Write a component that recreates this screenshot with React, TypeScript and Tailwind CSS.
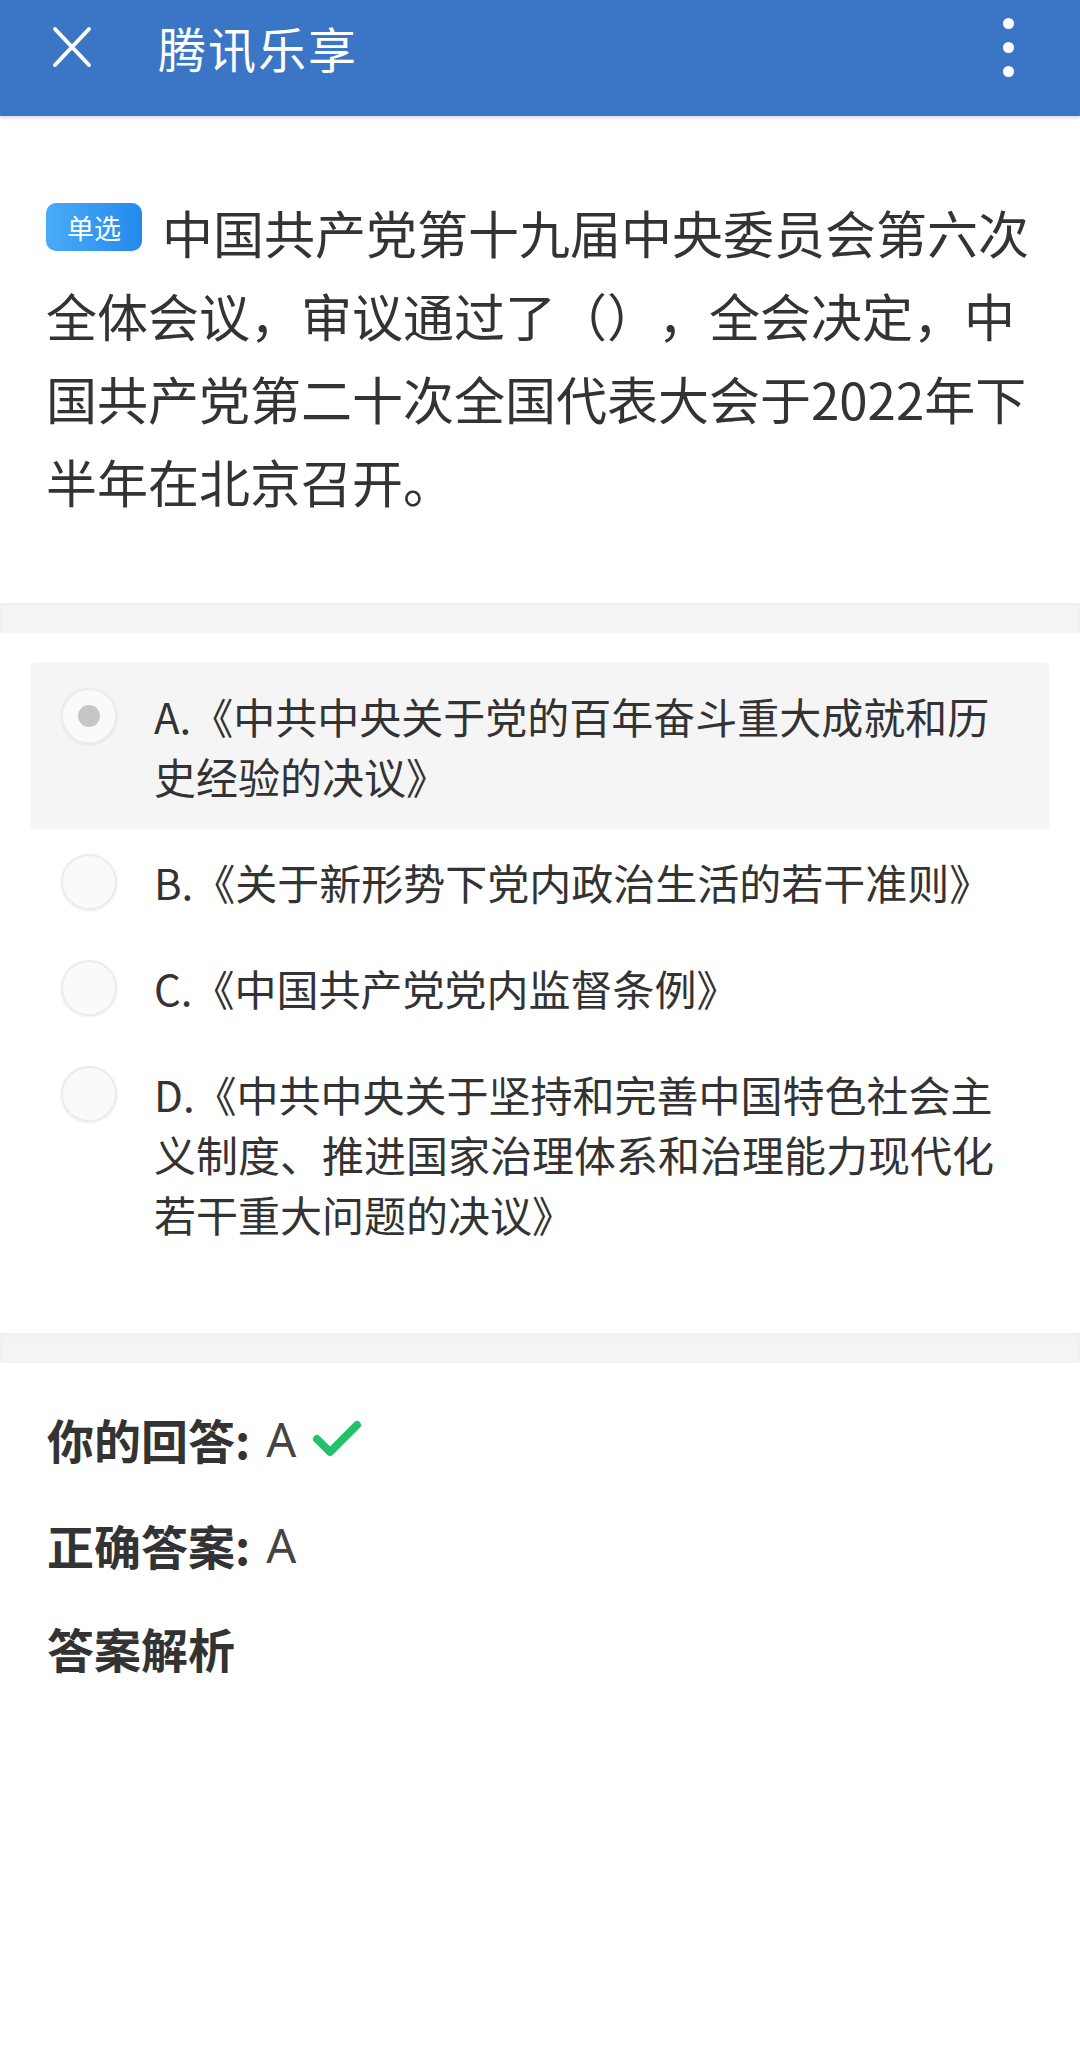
import React from 'react'

// 题目数据
const question = {
  type: '单选',
  text: '中国共产党第十九届中央委员会第六次全体会议，审议通过了（），全会决定，中国共产党第二十次全国代表大会于2022年下半年在北京召开。',
}

const options = [
  { key: 'A', text: '《中共中央关于党的百年奋斗重大成就和历史经验的决议》' },
  { key: 'B', text: '《关于新形势下党内政治生活的若干准则》' },
  { key: 'C', text: '《中国共产党党内监督条例》' },
  { key: 'D', text: '《中共中央关于坚持和完善中国特色社会主义制度、推进国家治理体系和治理能力现代化若干重大问题的决议》' },
]

const myAnswer = 'A'
const rightAnswer = 'A'

function Radio({ checked }: { checked: boolean }) {
  return (
    <div className="w-[56px] h-[56px] shrink-0 rounded-full border-2 border-[#ececec] bg-[#fafafa] shadow-[0_1px_3px_rgba(0,0,0,0.08)] flex items-center justify-center mt-[2px]">
      {checked && <div className="w-[22px] h-[22px] rounded-full bg-[#c6c6c6]" />}
    </div>
  )
}

function Divider() {
  return <div className="h-[30px] bg-[#f4f4f4] shadow-[inset_0_2px_4px_rgba(0,0,0,0.03)]" />
}

export default function App() {
  return (
    <div className="min-h-[2060px] bg-white font-['Noto_Sans_CJK_SC',sans-serif] text-[#333] [text-spacing-trim:space-all]">
      {/* 顶部栏 */}
      <header className="h-[116px] bg-[#3b76c6] flex items-center pb-[22px] shadow-[0_2px_3px_rgba(0,0,0,0.15)]">
        <div className="w-[158px] pl-[50px]">
          <svg width="44" height="44" viewBox="0 0 44 44" fill="none" stroke="white" strokeWidth="4" strokeLinecap="round">
            <path d="M5 4 L39 40 M39 4 L5 40" />
          </svg>
        </div>
        <h1 className="flex-1 text-white text-[48px] leading-none tracking-[2px]">腾讯乐享</h1>
        <div className="w-[144px] flex flex-col items-center gap-[13px]">
          <span className="w-[11px] h-[11px] rounded-full bg-white" />
          <span className="w-[11px] h-[11px] rounded-full bg-white" />
          <span className="w-[11px] h-[11px] rounded-full bg-white" />
        </div>
      </header>

      {/* 题干 */}
      <section className="px-[46px] pt-[75px] pb-[80px]">
        <p className="text-[51px] leading-[83px]">
          <span className="inline-flex align-top mt-[12px] mr-[20px] w-[96px] h-[48px] items-center justify-center rounded-[10px] bg-gradient-to-r from-[#4aabf9] to-[#2289ec] text-white text-[27px] leading-none">
            {question.type}
          </span>
          {question.text}
        </p>
      </section>

      <Divider />

      {/* 选项 */}
      <section className="px-[31px] pt-[30px] pb-[66px]">
        {options.map((opt) => {
          const selected = opt.key === myAnswer
          return (
            <div
              key={opt.key}
              className={`flex pl-[30px] pr-[33px] py-[23px] ${selected ? 'bg-[#f5f5f5] shadow-[0_0_4px_rgba(0,0,0,0.03)]' : ''}`}
            >
              <Radio checked={selected} />
              <div className="ml-[37px] flex-1 text-[42px] leading-[60px] text-[#333]">
                {opt.key}.{opt.text}
              </div>
            </div>
          )
        })}
      </section>

      <Divider />

      {/* 答案 */}
      <section className="px-[47px] pt-[46px]">
        <div className="h-[60px] flex items-center text-[47px] mb-[46px]">
          <span className="font-bold text-[#333]">你的回答:</span>
          <span className="ml-[16px] text-[#444] font-['Noto_Sans',sans-serif]">{myAnswer}</span>
          <svg className="ml-[16px]" width="50" height="40" viewBox="0 0 50 40" fill="none" stroke="#25c06b" strokeWidth="8" strokeLinecap="round" strokeLinejoin="round">
            <path d="M5 20 L18 33 L45 6" />
          </svg>
        </div>
        <div className="h-[60px] flex items-center text-[47px] mb-[43px]">
          <span className="font-bold text-[#333]">正确答案:</span>
          <span className="ml-[16px] text-[#444] font-['Noto_Sans',sans-serif]">{rightAnswer}</span>
        </div>
        <div className="h-[60px] flex items-center text-[47px]">
          <span className="font-bold text-[#333]">答案解析</span>
        </div>
      </section>
    </div>
  )
}
